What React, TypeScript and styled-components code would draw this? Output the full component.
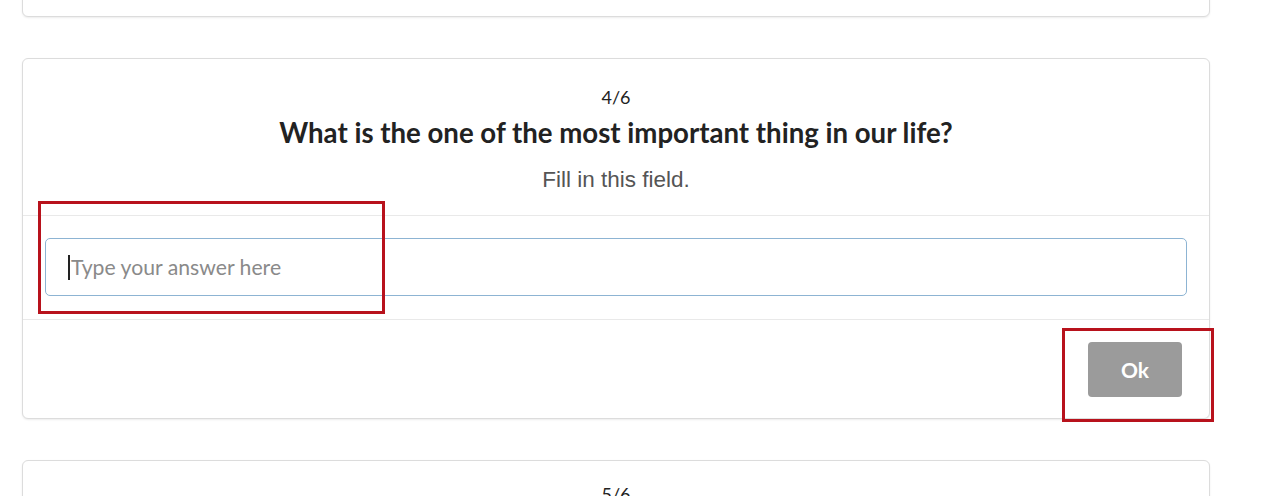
import React from "react";
import styled, { createGlobalStyle } from "styled-components";

const Global = createGlobalStyle`
  html, body { margin: 0; padding: 0; background: #ffffff; }
  body { font-family: Lato, "Liberation Sans", sans-serif; overflow: hidden; }
`;

const Page = styled.div`
  width: 1280px;
  height: 496px;
  overflow: hidden;
  position: relative;
`;

const List = styled.div`
  display: flex;
  flex-direction: column;
  gap: 41px;
  padding: 0 70px 0 22px;
  margin-top: -60px;
`;

const Card = styled.div<{ $h?: number }>`
  position: relative;
  width: 1188px;
  box-sizing: border-box;
  border: 1px solid #dcdcdc;
  border-radius: 6px;
  background: #fff;
  box-shadow: 0 1px 2px rgba(0, 0, 0, 0.08);
  ${(p) => (p.$h ? `height: ${p.$h}px;` : "")}
`;

const Header = styled.div`
  display: flex;
  flex-direction: column;
  align-items: center;
  padding: 27px 0 22px;
  border-bottom: 1px solid #e9e9e9;
`;

const Counter = styled.div`
  font-family: Lato, sans-serif;
  font-size: 18px;
  line-height: 22px;
  color: #222;
`;

const Title = styled.h2`
  margin: 9px 0 0;
  font-family: Lato, sans-serif;
  font-weight: 700;
  font-size: 27.6px;
  line-height: 32px;
  color: #222;
`;

const Hint = styled.div`
  margin-top: 18px;
  font-family: "Liberation Sans", Arial, sans-serif;
  font-size: 22.5px;
  line-height: 26px;
  color: #555;
`;

const Body = styled.div`
  padding: 22px 22px 23px 22px;
  border-bottom: 1px solid #e9e9e9;
`;

const Field = styled.div`
  height: 58px;
  box-sizing: border-box;
  border: 1px solid #8db4d3;
  border-radius: 5px;
  display: flex;
  align-items: center;
  padding-left: 22px;
  font-family: Lato, sans-serif;
  font-size: 21.2px;
  color: #8a8a8a;
`;

const Caret = styled.span`
  display: inline-block;
  width: 2px;
  height: 25px;
  background: #222;
  margin-right: 1px;
`;

const Footer = styled.div`
  display: flex;
  justify-content: flex-end;
  padding: 22px 27px 21px;
`;

const OkButton = styled.button`
  width: 94px;
  height: 55px;
  border: none;
  border-radius: 4px;
  background: #9b9b9b;
  color: #fff;
  font-family: Lato, sans-serif;
  font-weight: 700;
  font-size: 21px;
`;

const Mark = styled.div<{ $x: number; $y: number; $w: number; $h: number }>`
  position: absolute;
  left: ${(p) => p.$x}px;
  top: ${(p) => p.$y}px;
  width: ${(p) => p.$w}px;
  height: ${(p) => p.$h}px;
  box-sizing: border-box;
  border: 3px solid #b8121c;
`;

const NextCounter = styled(Counter)`
  text-align: center;
  padding-top: 22px;
`;

export default function App() {
  return (
    <Page>
      <Global />
      <List>
        <Card $h={77} />
        <Card>
          <Header>
            <Counter>4/6</Counter>
            <Title>What is the one of the most important thing in our life?</Title>
            <Hint>Fill in this field.</Hint>
          </Header>
          <Body>
            <Field>
              <Caret />
              Type your answer here
            </Field>
          </Body>
          <Footer>
            <OkButton>Ok</OkButton>
          </Footer>
        </Card>
        <Card $h={120}>
          <NextCounter>5/6</NextCounter>
        </Card>
      </List>
      <Mark $x={38} $y={201} $w={347} $h={113} />
      <Mark $x={1062} $y={328} $w={152} $h={94} />
    </Page>
  );
}
